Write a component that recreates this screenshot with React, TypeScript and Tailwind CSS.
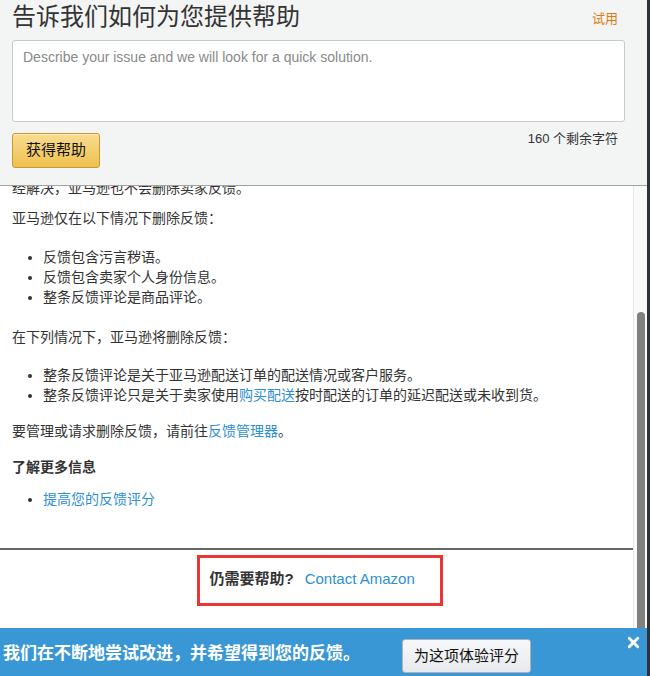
import { X } from "lucide-react"

const font = { fontFamily: '"Liberation Sans", Arial, "Noto Sans CJK SC", sans-serif' }

export default function App() {
  return (
    <div
      style={font}
      className="w-[650px] h-[676px] flex flex-col overflow-hidden bg-white border-r-[3px] border-[#2d3338] text-[#333]"
    >
      {/* Help search panel */}
      <div className="h-[186px] shrink-0 bg-[#f3f4f4] border-b border-[#a3a3a3] pl-[12px] pr-[22px]">
        <div className="flex items-start justify-between pt-[3px]">
          <h1 className="text-[24px] leading-[28px] font-normal text-[#333]">告诉我们如何为您提供帮助</h1>
          <a className="mt-[7px] mr-[7px] text-[13px] leading-[18px] text-[#e47911]">试用</a>
        </div>
        <textarea
          className="mt-[9px] block w-full h-[82px] resize-none rounded-[3px] border border-[#c9c9c9] bg-white px-[10px] py-[7px] text-[14px] leading-[18px] outline-none placeholder:text-[#8a8a8a]"
          placeholder="Describe your issue and we will look for a quick solution."
        />
        <div className="mt-[11px] flex items-start justify-between">
          <button className="w-[88px] h-[35px] rounded-[3px] border border-[#c8992c] bg-gradient-to-b from-[#f8dc8e] to-[#efc04c] text-[15px] text-[#111] shadow-[inset_0_1px_0_rgba(255,255,255,0.5)]">
            获得帮助
          </button>
          <span className="mt-[-3px] mr-[7px] text-[13px] leading-[18px] text-[#333]">160 个剩余字符</span>
        </div>
      </div>

      {/* Scrolling article */}
      <div className="flex-1 flex min-h-0">
        <div className="flex-1 overflow-hidden text-[14px] leading-[20px]">
          <div className="px-[12px]">
            <p className="-mt-[8px]">经解决，亚马逊也不会删除卖家反馈。</p>
            <p className="mt-[10px]">亚马逊仅在以下情况下删除反馈：</p>
            <ul className="mt-[19px] list-disc pl-[31px]">
              <li>反馈包含污言秽语。</li>
              <li>反馈包含卖家个人身份信息。</li>
              <li>整条反馈评论是商品评论。</li>
            </ul>
            <p className="mt-[20px]">在下列情况下，亚马逊将删除反馈：</p>
            <ul className="mt-[18px] list-disc pl-[31px]">
              <li>整条反馈评论是关于亚马逊配送订单的配送情况或客户服务。</li>
              <li>
                整条反馈评论只是关于卖家使用<a className="text-[#2d8fd5]">购买配送</a>按时配送的订单的延迟配送或未收到货。
              </li>
            </ul>
            <p className="mt-[16px]">
              要管理或请求删除反馈，请前往<a className="text-[#2d8fd5]">反馈管理器</a>。
            </p>
            <h3 className="mt-[16px] font-bold">了解更多信息</h3>
            <ul className="mt-[12px] list-disc pl-[31px]">
              <li>
                <a className="text-[#2d8fd5]">提高您的反馈评分</a>
              </li>
            </ul>
          </div>
          <div className="mt-[39px] h-[2px] bg-[#666]" />
          <div className="mt-[5px] flex justify-center">
            <div className="ml-[6px] w-[246px] h-[51px] border-[3px] border-[#ec3434] flex items-center pl-[10px] pb-[3px] gap-[11px] text-[15px]">
              <span className="font-bold">仍需要帮助?</span>
              <a className="text-[#2d8fd5]">Contact Amazon</a>
            </div>
          </div>
        </div>
        {/* scrollbar */}
        <div className="w-[14px] shrink-0 bg-[#fafafa] border-l border-[#e6e6e6] flex flex-col">
          <div className="mt-[126px] ml-[3px] w-[8px] flex-1 rounded-t-full bg-[#808080]" />
        </div>
      </div>

      {/* Feedback bar */}
      <div className="h-[48px] shrink-0 bg-[#3a97d6] flex items-center pl-[3px] pr-[5px]">
        <span className="text-[17px] font-bold text-white leading-[20px] mt-[4px]">
          我们在不断地尝试改进，并希望得到您的反馈。
        </span>
        <button className="ml-[42px] mt-[8px] w-[129px] h-[34px] rounded-[3px] border border-[#adb1b8] bg-gradient-to-b from-[#f7f8fa] to-[#e7e9ec] text-[15px] text-[#111]">
          为这项体验评分
        </button>
        <X className="ml-auto self-start mt-[6px] w-[17px] h-[17px] text-white" strokeWidth={4} />
      </div>
    </div>
  )
}
